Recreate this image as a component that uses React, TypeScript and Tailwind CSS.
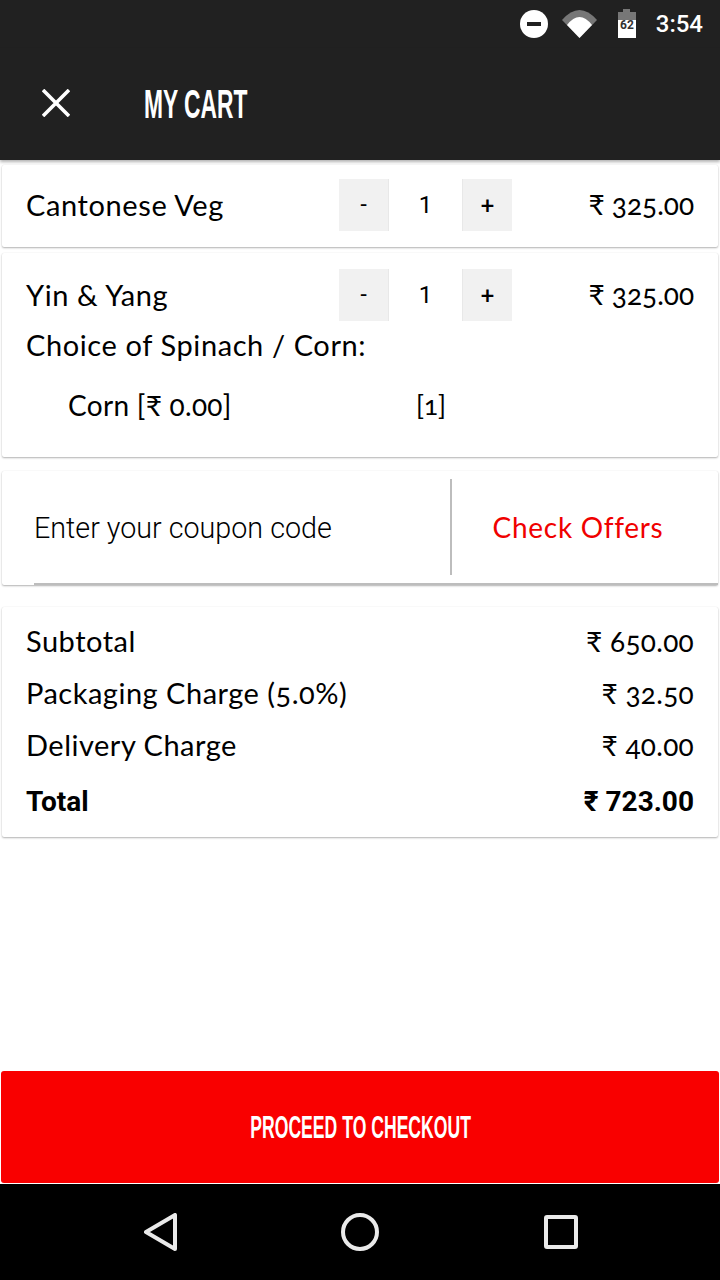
const raleway = "font-['Lato','Noto_Sans',sans-serif]";
const bebas = "font-['Liberation_Sans','Arial',sans-serif]";

const Stepper = () => (
  <div className="flex items-center">
    <div className="flex h-[52px] w-[50px] items-center justify-center border-r border-[#e8e8e8] bg-[#f1f1f1] pb-1 text-[22px] font-medium">-</div>
    <div className="flex h-[52px] w-[73px] items-center justify-center font-['Roboto',sans-serif] text-[24px]">1</div>
    <div className="flex h-[52px] w-[50px] items-center justify-center border-l border-[#e8e8e8] bg-[#f1f1f1] text-[24px] font-bold">+</div>
  </div>
);

const ItemRow = ({ name }: { name: string }) => (
  <div className="flex items-center">
    <span className="w-[313px] text-[29px] leading-[52px] tracking-[0.6px]">{name}</span>
    <Stepper />
    <span className="flex-1 pb-[2px] text-right text-[28px] leading-[50px] oldstyle-nums">₹ 325.00</span>
  </div>
);

const SummaryRow = ({ label, value }: { label: string; value: string }) => (
  <div className="flex h-[52px] items-center justify-between oldstyle-nums">
    <span className="text-[29px] tracking-[0.5px]">{label}</span>
    <span className="text-[28px] tracking-[0.3px]">{value}</span>
  </div>
);

const card = "mx-[2px] rounded-[2px] bg-white shadow-[0_1px_2px_rgba(0,0,0,0.3),0_0_1px_rgba(0,0,0,0.08)]";

export default function App() {
  return (
    <div className={`flex h-[1280px] w-[720px] flex-col overflow-hidden bg-white text-black ${raleway}`}>
      <div className="flex h-[48px] items-center justify-end bg-[#212121] pr-[17px] text-white">
        <svg width="30" height="30" viewBox="0 0 30 30" className="mr-[12px]">
          <circle cx="14" cy="15" r="14" fill="#fff" />
          <rect x="7" y="13" width="14" height="4" fill="#212121" />
        </svg>
        <svg width="36" height="30" viewBox="0 0 36 30" className="mr-[19px]">
          <path d="M0 11 Q17.5 -9 35 11 L17.5 29 Z" fill="#777" />
          <path d="M5 16 Q17.5 0 30 16 L17.5 29 Z" fill="#fff" />
        </svg>
        <svg width="20" height="30" viewBox="0 0 20 30" className="mr-[19px]">
          <path d="M6 0 H13 V3 H19 V12 H1 V3 H6 Z" fill="#777" />
          <rect x="1" y="11" width="18" height="18" fill="#fff" />
          <text x="10" y="20" textAnchor="middle" fontSize="12" fontWeight="700" fontFamily="Roboto" fill="#333">62</text>
        </svg>
        <span className="font-['Roboto',sans-serif] text-[24px] font-medium">3:54</span>
      </div>

      <header className="flex h-[112px] items-center bg-[#212121] shadow-[0_2px_3px_rgba(0,0,0,0.3)]">
        <svg width="28" height="28" viewBox="0 0 28 28" className="ml-[42px] mb-[2px]" stroke="#fff" strokeWidth="3.6">
          <path d="M1 1 L27 27 M27 1 L1 27" />
        </svg>
        <h1 className={`ml-[74px] origin-left scale-x-[0.57] text-[40px] font-bold whitespace-nowrap text-white ${bebas}`}>MY CART</h1>
      </header>

      <div className={`${card} mt-[5px] h-[82px] px-6 pt-[14px]`}>
        <ItemRow name="Cantonese Veg" />
      </div>

      <div className={`${card} mt-[6px] h-[204px] px-6 pt-[16px]`}>
        <ItemRow name="Yin & Yang" />
        <div className="mt-[-2px] text-[29px] leading-[52px] tracking-[0.6px]">Choice of Spinach / Corn:</div>
        <div className="mt-[8px] flex pl-[42px] text-[28px] leading-[52px] oldstyle-nums">
          <span className="w-[348px] tracking-[0.3px]">Corn [₹ 0.00]</span>
          <span className="text-[26px]">[1]</span>
        </div>
      </div>

      <div className={`${card} relative mt-[14px] flex h-[114px] items-center`}>
        <div className="mb-[2px] flex h-[96px] w-[450px] items-center border-r-2 border-[#bdbdbd] pt-[4px] pl-[32px] font-['Roboto',sans-serif] text-[28.7px] font-light">
          Enter your coupon code
        </div>
        <div className="flex-1 pr-[14px] pb-[2px] text-center text-[28px] tracking-[0.7px] text-[#f00000]">Check Offers</div>
        <div className="absolute right-0 bottom-0 left-[32px] h-[2px] bg-[#bdbdbd]" />
      </div>

      <div className={`${card} mt-[22px] h-[230px] px-6 pt-[8px]`}>
        <SummaryRow label="Subtotal" value="₹ 650.00" />
        <SummaryRow label="Packaging Charge (5.0%)" value="₹ 32.50" />
        <SummaryRow label="Delivery Charge" value="₹ 40.00" />
        <div className="mt-[5px] flex h-[52px] items-center justify-between font-['Roboto',sans-serif] text-[28px] font-bold">
          <span>Total</span>
          <span>₹ 723.00</span>
        </div>
      </div>

      <div className="flex-1" />

      <div className="mx-[1px] mb-[1px] flex h-[112px] items-center justify-center rounded-[3px] bg-[#f90000]">
        <span className={`ml-[2px] scale-x-[0.55] text-[32px] font-bold whitespace-nowrap text-white ${bebas}`}>PROCEED TO CHECKOUT</span>
      </div>

      <nav className="flex h-[96px] items-center justify-center bg-black">
        <svg width="34" height="38" viewBox="0 0 34 38" className="mr-[163px] ml-[2px]" fill="none" stroke="#eaeaea" strokeWidth="4" strokeLinejoin="round">
          <path d="M31 2 V36 L2 19 Z" />
        </svg>
        <svg width="38" height="38" viewBox="0 0 38 38" className="mr-[165px]" fill="none" stroke="#eaeaea" strokeWidth="4">
          <circle cx="19" cy="19" r="17" />
        </svg>
        <svg width="34" height="34" viewBox="0 0 34 34" fill="none" stroke="#eaeaea" strokeWidth="4" strokeLinejoin="round">
          <rect x="2" y="2" width="30" height="30" rx="1" />
        </svg>
      </nav>
    </div>
  );
}
